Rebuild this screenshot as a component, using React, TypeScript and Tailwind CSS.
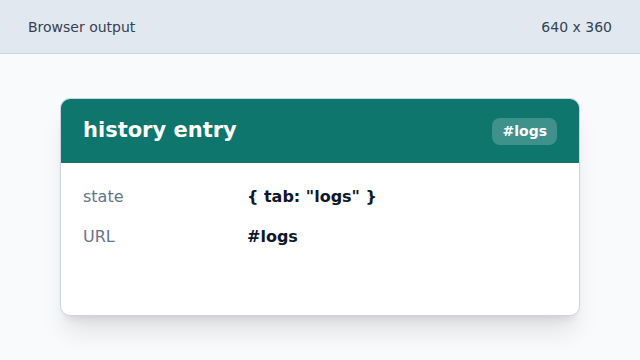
export default function App() {
  const rows = [
    { label: 'state', value: '{ tab: "logs" }' },
    { label: 'URL', value: '#logs' },
  ];

  return (
    <div className="min-h-screen h-[360px] bg-[#f8fafc] font-['DejaVu_Sans',sans-serif]">
      {/* Top bar */}
      <div className="flex h-[54px] items-center justify-between border-b border-[#cbd5e1] bg-[#e2e8f0] px-[28px] pt-[1px] text-[14px] text-[#334155]">
        <span>Browser output</span>
        <span>640 x 360</span>
      </div>

      {/* Card */}
      <div className="mx-auto mt-[44px] h-[218px] w-[520px] overflow-hidden rounded-[10px] border border-[#cbd5e1] bg-white shadow-xl">
        <div className="flex h-[64px] items-center justify-between bg-[#0f766e] px-[22px]">
          <h1 className="text-[21px] font-bold text-white">history entry</h1>
          <span className="flex h-[27px] items-center rounded-lg bg-white/20 px-[10px] text-[14px] font-bold text-white">
            #logs
          </span>
        </div>
        <div className="px-[22px] pt-[14px]">
          {rows.map((row) => (
            <div key={row.label} className="flex h-[40px] items-center">
              <span className="w-[164px] text-[16px] text-[#64748b]">{row.label}</span>
              <span className="text-[16px] font-bold text-[#0f172a]">{row.value}</span>
            </div>
          ))}
        </div>
      </div>
    </div>
  );
}
